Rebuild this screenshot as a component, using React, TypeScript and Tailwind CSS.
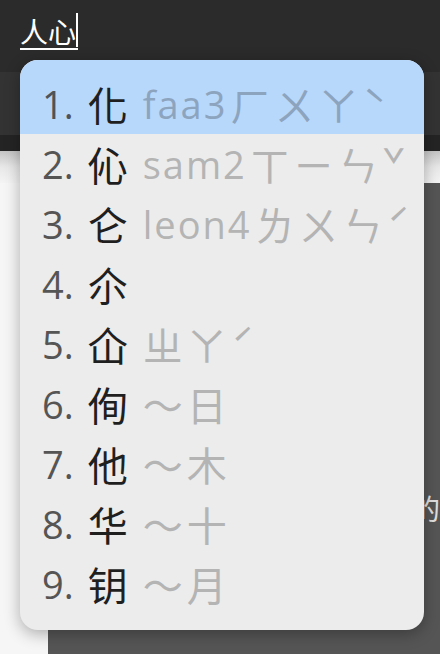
import React from 'react';

type Candidate = {
  n: number;
  ch: string;
  code?: string;
  zhuyin?: string;
};

const candidates: Candidate[] = [
  { n: 1, ch: '化', code: 'faa3', zhuyin: 'ㄏㄨㄚˋ' },
  { n: 2, ch: '伈', code: 'sam2', zhuyin: 'ㄒㄧㄣˇ' },
  { n: 3, ch: '仑', code: 'leon4', zhuyin: 'ㄌㄨㄣˊ' },
  { n: 4, ch: '尒' },
  { n: 5, ch: '仚', zhuyin: 'ㄓㄚˊ' },
  { n: 6, ch: '侚', zhuyin: '～日' },
  { n: 7, ch: '他', zhuyin: '～木' },
  { n: 8, ch: '华', zhuyin: '～十' },
  { n: 9, ch: '钥', zhuyin: '～月' },
];

const latin = "font-['Open_Sans','Noto_Sans_CJK_TC',sans-serif]";
const cjk = "font-['Noto_Sans_CJK_TC','Noto_Sans_CJK_SC',sans-serif]";

const App: React.FC = () => {
  return (
    <div className="relative w-[440px] h-[654px] overflow-hidden bg-white flex flex-col">
      <header className="h-[72px] bg-[#2b2b2b] px-5 pt-[14px]">
        <span className={`relative inline-block text-white text-[28px] leading-[34px] border-b-2 border-white pr-[2px] ${cjk}`}>
          人心
          <span className="absolute right-0 -top-[1px] h-[34px] w-[2px] bg-white" />
        </span>
      </header>
      <div className="h-[63px] bg-[#333333]" />
      <div className="h-[16px] bg-[#242424]" />
      <div className="h-[32px] bg-gradient-to-b from-[#c4c4c4] via-[#e8e8e8] to-[#f4f4f4]" />
      <div className="flex-1 flex">
        <div className="w-[48px] bg-[#f6f6f6]" />
        <div className={`flex-1 bg-[#555555] pl-[364px] pt-[308px] text-[28px] leading-[34px] text-[#e0e0e0] ${cjk}`}>
          的
        </div>
      </div>

      <div className="absolute left-[20px] top-[60px] w-[404px] h-[570px] rounded-[18px] bg-[#ececec] overflow-hidden shadow-[0_4px_16px_rgba(0,0,0,0.3)]">
        {candidates.map((c) => {
          const active = c.n === 1;
          const hintColor = active ? 'text-[#8da4be]' : 'text-[#b4b4b4]';
          return (
            <div
              key={c.n}
              className={`flex items-center pl-[22px] whitespace-nowrap ${active ? 'h-[74px] pt-[14px] bg-[#b8d8fb]' : 'h-[60px]'}`}
            >
              <span className={`text-[38px] leading-none ${latin} ${active ? 'text-[#4d5359]' : 'text-[#555555]'}`}>
                {c.n}.
              </span>
              <span className={`ml-[14px] text-[40px] leading-none text-[#1f1f1f] ${cjk}`}>{c.ch}</span>
              {c.code && (
                <span className={`ml-[15px] text-[38px] leading-none tracking-[2px] ${latin} ${hintColor}`}>{c.code}</span>
              )}
              {c.zhuyin && (
                <span
                  className={`${c.code ? 'ml-[3px]' : 'ml-[15px]'} text-[40px] leading-none tracking-[4px] ${cjk} ${hintColor}`}
                >
                  {c.zhuyin}
                </span>
              )}
            </div>
          );
        })}
      </div>
    </div>
  );
};

export default App;
